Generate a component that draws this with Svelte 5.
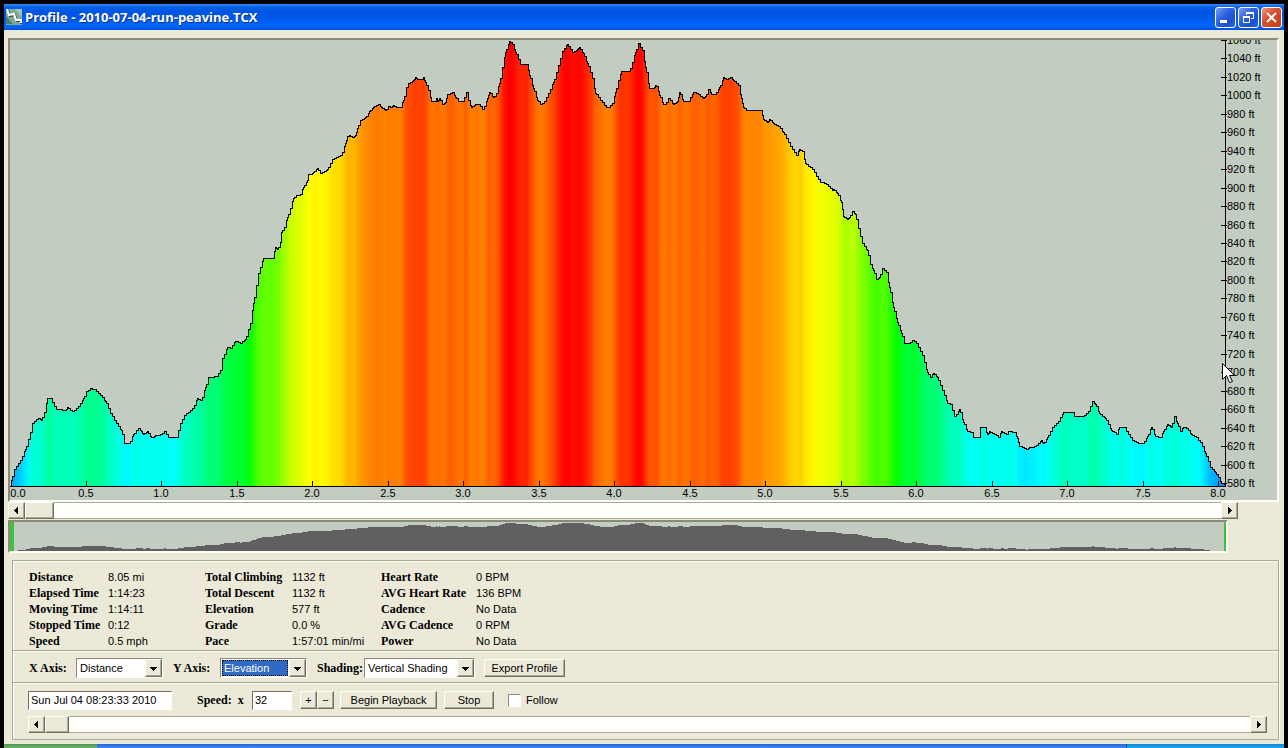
<script lang="ts">
	type Point = [number, number];

	// elevation trace, x and y in plot units
	const TRACE = `
		10,486 11,480 14,469 20,460 25,449 30,432 32,423 36,419 39,418 41,420 44,412 47,398 50,398 52,402 56,409
		65,410 67,407 70,410 73,411 78,406 83,398 86,391 90,388 94,389 100,395 105,401 110,413 116,423 121,430
		124,443 129,443 133,434 138,428 141,431 143,434 147,431 151,437 155,435 161,434 164,431 168,437 176,437
		180,423 184,415 190,410 194,405 197,398 201,400 205,387 208,377 216,376 220,370 222,358 227,347 230,348
		235,341 237,341 240,343 245,339 250,323 253,303 258,273 263,258 272,258 275,247 277,249 280,242 281,232
		284,227 287,217 290,208 293,198 296,195 300,194 303,187 307,180 308,174 310,174 313,172 317,168 320,173
		327,169 332,159 341,155 345,143 347,136 349,135 352,137 355,135 357,128 360,120 365,117 369,111 373,107
		378,104 381,107 385,110 388,106 390,107 393,105 396,107 400,107 403,100 406,87 408,83 413,80 415,77
		417,79 422,79 423,77 425,82 428,90 431,101 435,101 436,98 437,101 439,98 442,104 445,102 447,94 452,92
		455,97 458,101 462,101 466,92 468,100 471,107 475,104 479,104 482,109 484,106 487,98 489,92 493,97
		496,93 499,83 502,67 505,52 509,41 512,44 515,52 520,64 527,64 529,75 533,88 537,100 540,104 544,101
		548,93 553,82 558,65 562,51 567,44 572,52 577,49 579,47 583,53 587,63 592,78 595,93 600,100 606,107
		608,107 612,103 615,92 618,80 621,71 629,71 632,62 635,52 638,43 642,50 645,67 649,88 653,88 655,85
		657,86 659,95 663,104 665,104 668,98 673,104 677,101 679,92 683,101 688,101 693,92 697,93 700,96
		703,98 705,96 708,89 711,94 715,94 719,87 723,77 726,79 730,77 733,80 738,85 741,98 743,107 746,110
		761,110 763,119 767,122 769,119 773,123 778,126 783,132 786,138 790,146 796,155 799,149 802,151 805,163
		812,169 820,182 825,183 832,190 833,189 837,193 841,202 843,216 847,219 849,217 852,211 855,214 858,228
		862,243 867,250 870,264 873,270 876,279 879,277 882,268 886,272 889,287 893,307 897,322 901,333 904,343
		909,343 912,340 915,341 922,355 927,372 930,377 933,373 937,377 942,390 947,403 950,404 954,416 956,414
		959,409 963,422 967,431 972,432 973,437 978,437 980,427 984,427 987,434 989,431 993,433 998,437
		1001,431 1006,434 1008,431 1014,432 1017,438 1019,446 1023,447 1026,449 1029,447 1035,446 1038,443
		1041,440 1043,443 1047,437 1052,427 1058,421 1063,412 1072,412 1074,416 1083,416 1088,411 1092,401
		1095,404 1099,413 1105,418 1111,430 1116,434 1119,427 1124,427 1128,434 1132,440 1138,443 1143,443
		1147,436 1151,427 1155,436 1160,437 1163,431 1167,424 1171,427 1174,416 1177,423 1180,431 1183,427
		1187,428 1191,434 1195,436 1200,442 1205,453 1210,467 1215,472 1218,477 1221,483 1225,484
	`;

	const PLOT_LEFT = 10;
	const PLOT_RIGHT = 1225;
	const BASELINE = 486;
	const MILE_WIDTH = 151;

	// y position -> hue of the vertical shading
	const HUES: Point[] = [
		[45, 0],
		[80, 16],
		[107, 30],
		[175, 60],
		[260, 98],
		[325, 120],
		[345, 134],
		[395, 156],
		[440, 180],
		[486, 208]
	];

	const points = TRACE.trim()
		.split(/\s+/)
		.map((pair) => pair.split(",").map(Number) as Point);

	function hueAt(y: number): number {
		if (y <= HUES[0][0]) return 0;
		for (let i = 1; i < HUES.length; i++) {
			const [y1, h1] = HUES[i];
			const [y0, h0] = HUES[i - 1];
			if (y <= y1) return h0 + ((h1 - h0) * (y - y0)) / (y1 - y0);
		}
		return 208;
	}

	// whole-pixel staircase, a step on every other column and on each point
	function staircase(list: Point[]): string {
		let path = `M${list[0][0]} ${list[0][1]}`;
		for (let i = 1; i < list.length; i++) {
			const [x0, y0] = list[i - 1];
			const [x1, y1] = list[i];
			for (let x = x0 + 1; x <= x1; x++) {
				if (x % 2 && x < x1) continue;
				path += `H${x}V${Math.round(y0 + ((y1 - y0) * (x - x0)) / (x1 - x0))}`;
			}
		}
		return path;
	}

	const outline = staircase(points);
	const area = `${outline}V${BASELINE}H${PLOT_LEFT}Z`;
	const stops = points.map(([x, y]) => ({
		offset: (x - PLOT_LEFT) / (PLOT_RIGHT - PLOT_LEFT),
		color: `hsl(${hueAt(y)} 100% 50%)`
	}));

	const overview = `${staircase(
		points.map(([x, y]): Point => [x - PLOT_LEFT, 5 + (y - 107) * 0.066])
	)}V32H0Z`;

	const miles = Array.from({ length: 17 }, (_, i) => i / 2);
	const feet = Array.from({ length: 25 }, (_, i) => 580 + i * 20);

	const feetY = (ft: number) => Math.round(483 - ((ft - 580) * 18.46) / 20);

	const stats = [
		[
			["Distance", "8.05 mi"],
			["Elapsed Time", "1:14:23"],
			["Moving Time", "1:14:11"],
			["Stopped Time", "0:12"],
			["Speed", "0.5 mph"]
		],
		[
			["Total Climbing", "1132 ft"],
			["Total Descent", "1132 ft"],
			["Elevation", "577 ft"],
			["Grade", "0.0 %"],
			["Pace", "1:57:01 min/mi"]
		],
		[
			["Heart Rate", "0 BPM"],
			["AVG Heart Rate", "136 BPM"],
			["Cadence", "No Data"],
			["AVG Cadence", "0 RPM"],
			["Power", "No Data"]
		]
	];

	let xAxis = $state("Distance");
	let yAxis = $state("Elevation");
	let shading = $state("Vertical Shading");
	let timestamp = $state("Sun Jul 04 08:23:33 2010");
	let speed = $state(32);
	let follow = $state(false);
	let zoomOffset = $state(0);
	let position = $state(0);
</script>

{#snippet arrow(direction: string)}
	<svg class="arrow" width="7" height="7" viewBox="0 0 7 7" aria-hidden="true" shape-rendering="crispEdges">
		{#if direction === "left"}
			<path d="M5 0V7L1 3.5Z" />
		{:else if direction === "right"}
			<path d="M2 0V7L6 3.5Z" />
		{:else}
			<path d="M0 2H7L3.5 6Z" />
		{/if}
	</svg>
{/snippet}

<main class="window">
	<header class="title-bar">
		<svg class="app-icon" width="16" height="16" viewBox="0 0 16 16" aria-hidden="true">
			<rect width="16" height="16" fill="#7fa99b" />
			<path d="M0 7L7 15H0Z" fill="#4f8078" />
			<path d="M9 0H16V8Z" fill="#a5c5b5" />
			<path d="M2 1L4 7L9 6L11 12L15 12V15" fill="none" stroke="#2f4f4c" stroke-width="2" />
			<path d="M1 0L3 6L8 5L10 11L15 11V14" fill="none" stroke="#fff" stroke-width="2" />
		</svg>
		<h1>Profile - 2010-07-04-run-peavine.TCX</h1>
		<div class="window-buttons">
			<button aria-label="Minimize">
				<svg width="19" height="19" viewBox="0 0 19 19"><path d="M4 12H11V15H4Z" fill="#fff" /></svg>
			</button>
			<button aria-label="Restore">
				<svg width="19" height="19" viewBox="0 0 19 19" fill="none" stroke="#fff">
					<path d="M7.5 7V4.5H14.5V10.5H12" /><path d="M7 5H15" stroke-width="2" />
					<path d="M4.5 8.5H10.5V14.5H4.5Z" /><path d="M4 9H11" stroke-width="2" />
				</svg>
			</button>
			<button class="close" aria-label="Close">
				<svg width="19" height="19" viewBox="0 0 19 19"><path d="M5 5L14 14M14 5L5 14" stroke="#fff" stroke-width="2" /></svg>
			</button>
		</div>
	</header>

	<div class="content">
		<section class="profile sunken" aria-label="Elevation profile">
			<svg viewBox="10 40 1267 460" shape-rendering="crispEdges">
				<defs>
					<linearGradient id="shade" gradientUnits="userSpaceOnUse" x1={PLOT_LEFT} x2={PLOT_RIGHT} y1="0" y2="0">
						{#each stops as stop}
							<stop offset={stop.offset} stop-color={stop.color} />
						{/each}
					</linearGradient>
				</defs>
				<path d={area} fill="url(#shade)" />
				<path class="line" d={outline} transform="translate(0.5 0.5)" />
				<path class="line" d="M10 486.5H1225M1225.5 40V487" />

				{#each miles as mile}
					{@const x = PLOT_LEFT + Math.round(mile * MILE_WIDTH)}
					{#if mile > 0}
						<path class="line" d="M{x + 0.5} 481V486" />
					{/if}
					<text x={mile > 0 ? x : x + 8} y="497" text-anchor="middle">{mile.toFixed(1)}</text>
				{/each}

				{#each feet as ft}
					{@const y = feetY(ft)}
					<path class="line" d="M1221 {y + 0.5}H1227" />
					<text x="1227" y={y + 4}>{ft} ft</text>
				{/each}

				<path
					class="cursor"
					d="M1222.5 363.5V379.5L1226.5 375.5L1229.5 382.5L1232.5 381.5L1229.5 375.5H1234.5Z"
				/>
			</svg>
		</section>

		<div class="scrollbar zoom">
			<button aria-label="Scroll left">{@render arrow("left")}</button>
			<input type="range" aria-label="Profile scroll" bind:value={zoomOffset} />
			<button aria-label="Scroll right">{@render arrow("right")}</button>
		</div>

		<section class="overview sunken" aria-label="Overview">
			<svg viewBox="0 0 1216 29" shape-rendering="crispEdges">
				<path d={overview} fill="#606060" />
				<path d="M0 0H4V29H0ZM1214 0H1216V29H1214Z" fill="#3fc13f" />
			</svg>
		</section>

		<div class="panels">
			<section class="panel stats">
				{#each stats as column}
					<dl>
						{#each column as [name, value]}
							<dt>{name}</dt>
							<dd>{value}</dd>
						{/each}
					</dl>
				{/each}
			</section>

			<section class="panel axes">
				<label for="x-axis">X Axis:</label>
				<span class="combo">
					<select id="x-axis" bind:value={xAxis}>
						<option>Distance</option>
						<option>Time</option>
					</select>
					<span class="drop">{@render arrow("down")}</span>
				</span>
				<label for="y-axis">Y Axis:</label>
				<span class="combo active">
					<select id="y-axis" bind:value={yAxis}>
						<option>Elevation</option>
						<option>Speed</option>
					</select>
					<span class="drop">{@render arrow("down")}</span>
				</span>
				<label for="shading">Shading:</label>
				<span class="combo wide">
					<select id="shading" bind:value={shading}>
						<option>Vertical Shading</option>
						<option>No Shading</option>
					</select>
					<span class="drop">{@render arrow("down")}</span>
				</span>
				<button class="push export">Export Profile</button>
			</section>

			<section class="panel playback">
				<div class="playback-row">
					<input class="field time" aria-label="Time" bind:value={timestamp} />
					<label class="speed-label" for="speed">Speed:&nbsp; x</label>
					<input class="field speed" id="speed" bind:value={speed} />
					<div class="stepper">
						<button class="push" aria-label="Faster" onclick={() => (speed *= 2)}>+</button>
						<button class="push" aria-label="Slower" onclick={() => (speed /= 2)}>−</button>
					</div>
					<button class="push begin">Begin Playback</button>
					<button class="push stop">Stop</button>
					<label class="follow"><input type="checkbox" bind:checked={follow} />Follow</label>
				</div>
				<div class="scrollbar seek">
					<button aria-label="Back">{@render arrow("left")}</button>
					<input type="range" aria-label="Playback position" bind:value={position} />
					<button aria-label="Forward">{@render arrow("right")}</button>
				</div>
			</section>
		</div>
	</div>

	<footer class="taskbar"><span class="start"></span><span class="tasks"></span><span class="tray"></span></footer>
</main>

<style>
	:global(body) {
		background: #000;
	}

	.window,
	.window * {
		box-sizing: border-box;
	}

	.window {
		margin: 0 4px;
		padding-top: 4px;
		color: #000;
		font: 11px/16px "Liberation Sans", Arial, sans-serif;
	}

	button,
	input,
	select {
		margin: 0;
		padding: 0;
		border: 0;
		border-radius: 0;
		color: inherit;
		font: inherit;
	}

	svg {
		display: block;
	}

	.title-bar {
		display: flex;
		align-items: center;
		height: 26px;
		padding: 0 2px;
		background: linear-gradient(#3a8cf2, #0562ea 3px, #0054e0 8px, #005cf0 16px, #0068ff 22px, #0050d8);
	}

	h1 {
		flex: 1;
		margin: 0 0 0 3px;
		color: #fff;
		font: bold 13px/20px "Open Sans", "Noto Sans", sans-serif;
		text-shadow: 1px 1px #0a2f8c;
	}

	.window-buttons {
		display: flex;
		gap: 2px;
	}

	.window-buttons button {
		width: 21px;
		height: 21px;
		border: 1px solid #fff;
		border-radius: 3px;
		background: linear-gradient(135deg, #7c9ff0, #2f62e0 40%, #1c50d0 75%, #2a6cf4);
	}

	.window-buttons .close {
		background: linear-gradient(135deg, #f09a80, #dc5030 40%, #c83c14);
	}

	.content {
		padding: 8px 5px 4px 4px;
		background: #ece9d8;
	}

	.sunken {
		border: 2px solid;
		border-color: #8d8a7b #fffef6 #fffef6 #8d8a7b;
		background: #c2ccc1;
	}

	.profile text {
		font-size: 11px;
	}

	.line {
		fill: none;
		stroke: #000;
	}

	.cursor {
		fill: #fff;
		stroke: #000;
		shape-rendering: auto;
	}

	.scrollbar {
		display: flex;
		height: 17px;
	}

	.zoom {
		margin-right: 41px;
		--thumb: 29px;
	}

	.seek {
		--thumb: 24px;
	}

	.scrollbar button,
	.drop {
		display: flex;
		align-items: center;
		justify-content: center;
		flex: 0 0 17px;
		border: 1px solid;
		border-color: #fffef6 #716f64 #716f64 #fffef6;
		background: #ece9d8;
		box-shadow: inset -1px -1px #aca899;
	}

	.scrollbar input {
		flex: 1;
		min-width: 0;
		height: 17px;
		border: solid #aca899;
		border-width: 1px 0;
		background: #fffffc;
		appearance: none;
	}

	.scrollbar input::-webkit-slider-thumb {
		width: var(--thumb);
		height: 17px;
		border: 1px solid;
		border-color: #fffef6 #716f64 #716f64 #fffef6;
		background: #ece9d8;
		box-shadow: inset -1px -1px #aca899;
		appearance: none;
	}

	.overview {
		margin: 1px 51px 7px 0;
	}

	.panels {
		margin-left: 4px;
	}

	.panel {
		border: 1px solid #aca899;
		border-bottom: 0;
		box-shadow: inset 1px 1px #fffef6, 1px 0 #fffef6;
	}

	.stats {
		display: flex;
		height: 90px;
		padding: 8px 16px 0;
	}

	dl {
		display: grid;
		grid-template-columns: 79px 97px;
		grid-auto-rows: 16px;
		margin: 0;
		white-space: nowrap;
	}

	dl:nth-child(2) {
		grid-template-columns: 87px 89px;
	}

	dl:nth-child(3) {
		grid-template-columns: 95px 81px;
	}

	dd {
		margin: 0;
	}

	dt,
	.axes label,
	.speed-label {
		font: bold 12px/16px "Liberation Serif", "Times New Roman", serif;
	}

	.axes {
		display: flex;
		align-items: center;
		height: 32px;
		padding: 3px 16px 0;
	}

	.axes label {
		width: 47px;
	}

	.combo {
		position: relative;
		width: 87px;
		height: 20px;
		margin-right: 10px;
		padding: 1px;
		border: 1px solid;
		border-color: #8d8a7b #fffef6 #fffef6 #8d8a7b;
		background: #fff;
	}

	.combo.wide {
		width: 111px;
		margin-right: 9px;
	}

	.combo select {
		width: 100%;
		height: 16px;
		padding: 0 18px 0 2px;
		background: #fff;
		appearance: none;
	}

	.combo.active select {
		border-right: 17px solid #fff;
		padding-right: 0;
		background: #316ac5;
		color: #fff;
	}

	.combo.active::after {
		position: absolute;
		inset: 1px 18px 1px 1px;
		border: 1px dotted #000;
		content: "";
		pointer-events: none;
	}

	.drop {
		position: absolute;
		top: 0;
		right: 0;
		width: 17px;
		height: 18px;
		pointer-events: none;
	}

	.push {
		height: 18px;
		border: 1px solid;
		border-color: #fffef6 #716f64 #716f64 #fffef6;
		background: #ece9d8;
		box-shadow: inset -1px -1px #aca899;
		line-height: 14px;
		white-space: nowrap;
	}

	.export {
		width: 81px;
	}

	.playback {
		height: 58px;
		padding: 7px 11px 0 15px;
		border-bottom: 1px solid #aca899;
	}

	.playback-row {
		display: flex;
		align-items: center;
		height: 20px;
		margin-bottom: 6px;
	}

	.field {
		height: 19px;
		padding: 0 2px;
		border: 1px solid;
		border-color: #716f64 #fffef6 #fffef6 #716f64;
		background: #fff;
	}

	.time {
		width: 144px;
	}

	.speed-label {
		width: 55px;
		margin-left: 25px;
	}

	.speed {
		width: 40px;
	}

	.stepper {
		display: flex;
		margin: 0 6px 0 8px;
	}

	.stepper .push {
		width: 17px;
	}

	.begin {
		width: 97px;
		margin-right: 7px;
	}

	.stop {
		width: 50px;
	}

	.follow {
		display: flex;
		align-items: center;
		gap: 5px;
		margin-left: 14px;
	}

	.follow input {
		width: 13px;
		height: 13px;
		border: 1px solid;
		border-color: #8d8a7b #fffef6 #fffef6 #8d8a7b;
		background: #fff;
		appearance: none;
	}

	.follow input:checked {
		background: #316ac5;
	}

	.taskbar {
		display: flex;
		height: 4px;
	}

	.start {
		width: 93px;
		background: linear-gradient(#4f9a4c, #6cb368);
	}

	.tasks {
		flex: 1;
		background: linear-gradient(#2a62d8, #3f8cf3);
	}

	.tray {
		width: 158px;
		border-left: 1px solid #0d4f9c;
		background: linear-gradient(#1382d8, #19aef0);
	}
</style>
